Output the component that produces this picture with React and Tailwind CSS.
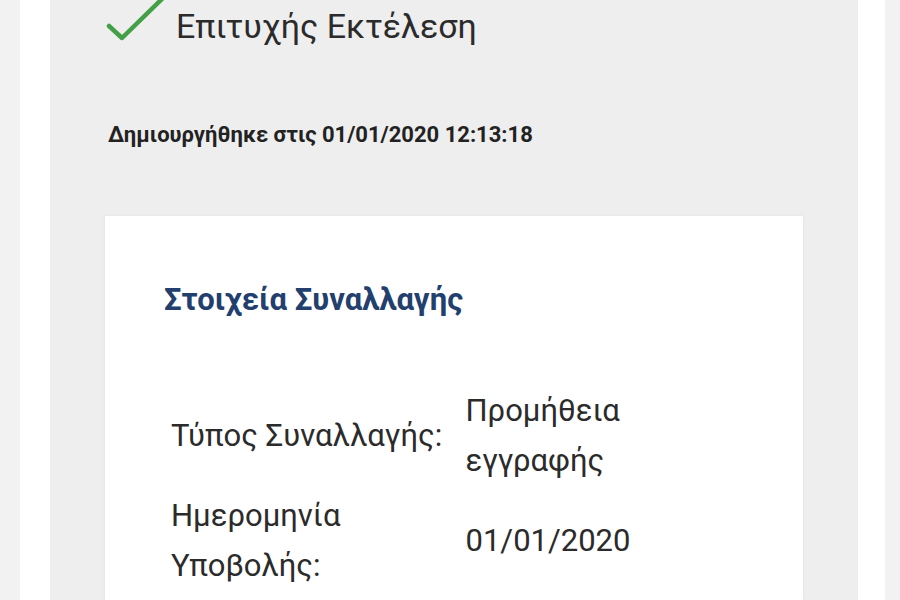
import React from 'react';

const rows = [
  { label: 'Τύπος Συναλλαγής:', value: 'Προμήθεια εγγραφής' },
  { label: 'Ημερομηνία Υποβολής:', value: '01/01/2020' },
];

const App = () => {
  return (
    <div className="flex h-[600px] w-[900px] overflow-hidden bg-white" style={{ fontFamily: 'Roboto, "Noto Sans", sans-serif' }}>
      {/* left edge */}
      <div className="w-[20px] bg-[#f2f2f2]" />
      <div className="w-[30px] bg-white" />

      {/* main panel */}
      <div className="flex w-[808px] flex-col bg-[#eeeeee] px-[55px] shadow-[2px_0_3px_rgba(0,0,0,0.04)]">
        {/* status header */}
        <div className="flex items-start">
          <svg width="64" height="50" viewBox="0 0 64 50" className="-mt-[6px] shrink-0">
            <path d="M4 32 L17 44 L61 1" fill="none" stroke="#43a047" strokeWidth="4.5" strokeLinecap="round" strokeLinejoin="round" />
          </svg>
          <div className="ml-[7px] mt-[6px] text-[34px] leading-[40px] text-[#2b2b2b]">Επιτυχής Εκτέλεση</div>
        </div>

        <div className="mt-[75px] pl-[3px] text-[22px] font-bold leading-[28px] text-[#222]">
          Δημιουργήθηκε στις 01/01/2020 12:13:18
        </div>

        {/* transaction card */}
        <div className="mt-[67px] flex-1 bg-white px-[59px] pt-[64px] shadow-[0_0_3px_rgba(0,0,0,0.06)]">
          <h2 className="text-[31px] font-bold leading-[40px] text-[#233f6e]">Στοιχεία Συναλλαγής</h2>

          <div className="mt-[66px] grid grid-cols-2 items-center gap-y-[5px] pl-[7px] text-[31px] leading-[50px] text-[#2b2b2b]">
            {rows.map((row) => (
              <React.Fragment key={row.label}>
                <div>{row.label}</div>
                <div className="pl-[8px]">{row.value}</div>
              </React.Fragment>
            ))}
          </div>
        </div>
      </div>

      {/* right edge */}
      <div className="w-[27px] bg-white" />
      <div className="flex-1 bg-[#f2f2f2]" />
    </div>
  );
};

export default App;
